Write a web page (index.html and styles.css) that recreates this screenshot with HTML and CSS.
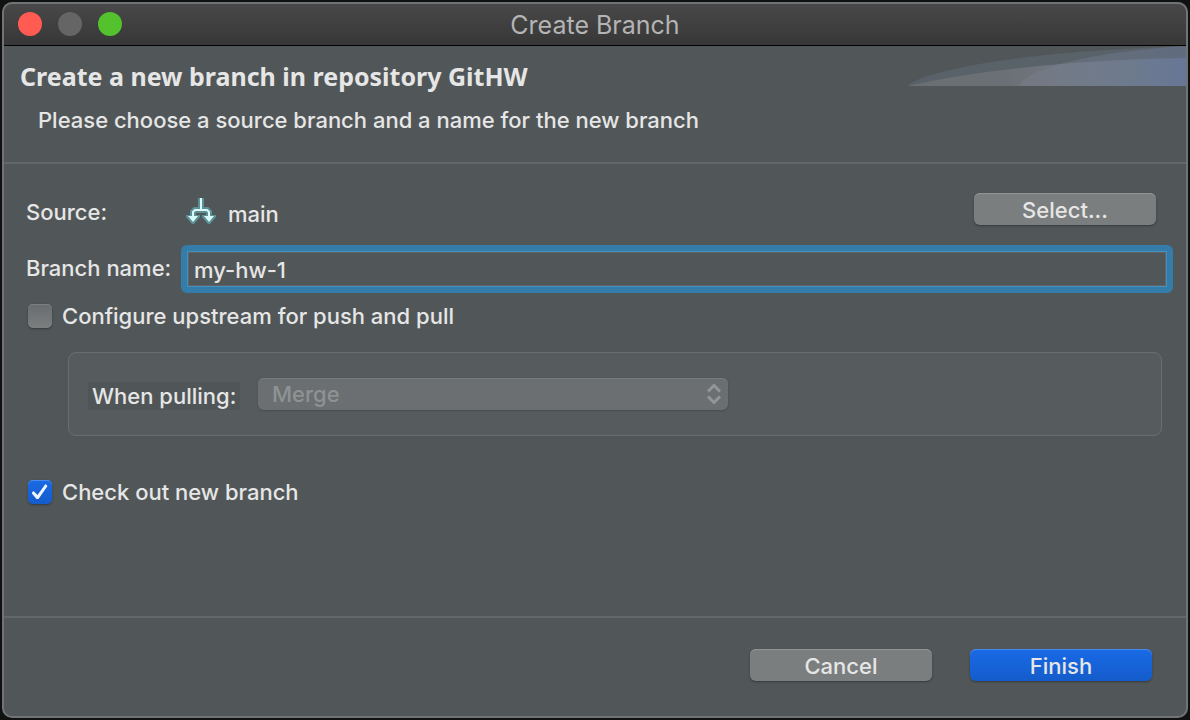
FILE: index.html
```html
<!DOCTYPE html>
<html lang="en">
<head>
<meta charset="utf-8">
<title>Create Branch</title>
<link rel="stylesheet" href="styles.css">
</head>
<body>
<main class="window">
  <header class="titlebar">
    <div class="lights">
      <button class="light close" aria-label="Close"></button>
      <button class="light minimize" aria-label="Minimize" disabled></button>
      <button class="light expand" aria-label="Zoom"></button>
    </div>
    <h1 class="title">Create Branch</h1>
  </header>

  <section class="intro">
    <div class="intro-text">
      <h2 class="heading">Create a new branch in repository GitHW</h2>
      <p class="hint">Please choose a source branch and a name for the new branch</p>
    </div>
    <svg class="banner" width="280" height="40" viewBox="0 0 280 40" aria-hidden="true">
      <defs>
        <linearGradient id="low" x1="0" x2="1" y1="0" y2="0">
          <stop offset="0" stop-color="#697071"/>
          <stop offset="0.35" stop-color="#6c7076"/>
          <stop offset="0.55" stop-color="#717781"/>
          <stop offset="0.8" stop-color="#6e7b8b"/>
          <stop offset="1" stop-color="#69769a"/>
        </linearGradient>
        <linearGradient id="over" x1="0" x2="1" y1="0" y2="0">
          <stop offset="0" stop-color="#7a828c" stop-opacity="0.4"/>
          <stop offset="1" stop-color="#667694" stop-opacity="0.5"/>
        </linearGradient>
      </defs>
      <path d="M0 40C10 28 90 6 280 0V40Z" fill="#596169"/>
      <path d="M0 40C40 30 140 14 280 12V40Z" fill="url(#low)"/>
      <path d="M112 40C116 22 190 5 280 0V40Z" fill="url(#over)"/>
    </svg>
  </section>

  <form class="form" id="branch-form">
    <div class="row source">
      <span class="label">Source:</span>
      <span class="value">
        <svg width="30" height="26" viewBox="0 0 30 26" aria-hidden="true">
          <g fill="none" stroke="#5c9296" stroke-width="6">
            <path d="M15 0V12M7 19V14L9 12H21L23 14V19"/>
          </g>
          <path d="M0 17H14V19L8 26H6L0 19ZM16 17H30V19L24 26H22L16 19Z" fill="#5c9296"/>
          <g fill="none" stroke="#d8fafb" stroke-width="2">
            <path d="M15 0V12M7 19V14L9 12H21L23 14V19"/>
          </g>
          <path d="M2 18H12L7 24ZM18 18H28L23 24Z" fill="#d8fafb"/>
        </svg>
        <span class="branch">main</span>
      </span>
      <button class="button select" type="button">Select...</button>
    </div>

    <div class="row name">
      <label class="label" for="branch">Branch name:</label>
      <input class="field" id="branch" type="text" value="my-hw-1">
    </div>

    <label class="check upstream"><input type="checkbox">Configure upstream for push and pull</label>

    <div class="group">
      <label class="group-label" for="pull">When pulling:</label>
      <div class="picker">
        <select id="pull" disabled><option>Merge</option></select>
        <svg class="arrows" width="14" height="20" viewBox="0 0 14 20" aria-hidden="true">
          <path d="M1 7.500 7 1.500 13 7.500M1 12.500 7 18.500 13 12.500"/>
        </svg>
      </div>
    </div>

    <label class="check checkout"><input type="checkbox" checked>Check out new branch</label>
  </form>

  <footer class="footer">
    <button class="button" type="button">Cancel</button>
    <button class="button primary" type="submit" form="branch-form">Finish</button>
  </footer>
</main>
</body>
</html>
```
FILE: styles.css
```css
* { box-sizing: border-box; }

body {
  margin: 0;
  height: 100vh;
  padding: 2px;
  background: #101211;
  color: #e6e6e6;
  font: 500 22px/28px Inter, "Liberation Sans", sans-serif;
}

h1, h2, p { margin: 0; }
button, input, select { font: inherit; color: inherit; }

.window {
  position: relative;
  display: flex;
  flex-direction: column;
  height: 100%;
  overflow: hidden;
  border-radius: 10px;
  background: #515658;
}

.window::after {
  content: "";
  position: absolute;
  inset: 0;
  border: 2px solid #707476;
  border-radius: 10px;
  pointer-events: none;
}

.titlebar {
  display: grid;
  grid-template-columns: 1fr auto 1fr;
  align-items: center;
  height: 44px;
  padding: 0 16px;
  border-bottom: 1px solid #000;
  background: linear-gradient(#494949, #373737);
}

.lights { display: flex; gap: 16px; }
.light { width: 24px; height: 24px; padding: 0; border: 0; border-radius: 50%; }
.close { background: #ff5b52; }
.minimize { background: #656565; }
.expand { background: #53c22c; }
.title { padding-top: 2px; color: #b4b4b4; font-size: 25px; font-weight: 400; }

.intro {
  display: flex;
  justify-content: space-between;
  height: 118px;
  border-bottom: 2px solid #626769;
}

.intro-text { padding: 16px 0 0 18px; }
.heading { font: bold 25px/28px "Noto Sans", sans-serif; }
.hint { padding: 16px 0 0 18px; }
.banner { flex: none; }

.form {
  display: flex;
  flex: 1;
  flex-direction: column;
  align-items: flex-start;
  padding: 28px 15px 0 24px;
}

.row { display: flex; align-items: center; align-self: stretch; }
.label { flex: none; width: 155px; }
.source { height: 34px; padding-right: 17px; }
.source .label { width: 160px; padding-top: 6px; }
.value { display: flex; flex: 1; align-items: center; gap: 12px; padding-top: 4px; }
.branch { padding-top: 5px; }

.name { margin-top: 19px; }
.name .label { padding-bottom: 3px; }

.field {
  flex: 1;
  min-width: 0;
  height: 48px;
  padding: 2px 7px 0;
  border: 6px solid #347dab;
  border-radius: 6px;
  outline: 0;
  background: #515658;
  box-shadow: inset 0 0 0 1px #4590bd, inset 0 0 0 2px #606466;
}

.button {
  width: 182px;
  height: 32px;
  padding: 2px 0 0;
  border: 0;
  border-radius: 6px;
  background: #7b7e7f;
  box-shadow: 0 1px 2px #35393b, inset 0 1px #939697;
}

.primary {
  background: linear-gradient(#196ae6, #145ccb);
  box-shadow: 0 1px 2px #35393b, inset 0 1px #4a8cee;
}

.check { display: flex; align-items: center; gap: 10px; margin-left: 2px; }

.check input {
  appearance: none;
  width: 24px;
  height: 24px;
  margin: 0;
  border-radius: 5px;
  background: linear-gradient(#686c6e, #7c7f80);
  box-shadow: 0 1px 2px #35393b, inset 0 1px #7d8082;
}

.check input:checked {
  display: grid;
  place-items: center;
  background: linear-gradient(#196ae6, #145ccb);
  box-shadow: 0 1px 2px #35393b, inset 0 1px #4a8cee;
}

.check input:checked::before {
  content: "";
  width: 17px;
  height: 16px;
  background: #f0f5ff;
  clip-path: path("M0 9L2 7L6 11L14 0L16 2L7 15H5Z");
}

.upstream { margin-top: 9px; }

.group {
  display: flex;
  align-self: stretch;
  align-items: center;
  gap: 18px;
  height: 84px;
  margin: 22px 11px 0 42px;
  padding: 0 19px;
  border: 1px solid #6a6e70;
  border-radius: 8px;
  background: #565b5d;
}

.group-label { width: 152px; margin-top: 4px; padding-left: 4px; background: #505557; white-space: nowrap; }
.picker { position: relative; flex: 0 1 470px; }

.picker select {
  display: block;
  width: 100%;
  height: 32px;
  padding: 0 14px;
  border: 0;
  border-radius: 6px;
  appearance: none;
  background: #6b6f71;
  box-shadow: 0 1px 2px #484c4e, inset 0 1px #777b7c;
  color: #8f9293;
  opacity: 1;
}

.arrows { position: absolute; top: 6px; right: 7px; fill: none; stroke: #939697; stroke-width: 3; pointer-events: none; }
.checkout { margin-top: 42px; }

.footer {
  display: flex;
  justify-content: flex-end;
  gap: 38px;
  height: 102px;
  padding: 31px 36px 0 0;
  border-top: 2px solid #626769;
}
```
